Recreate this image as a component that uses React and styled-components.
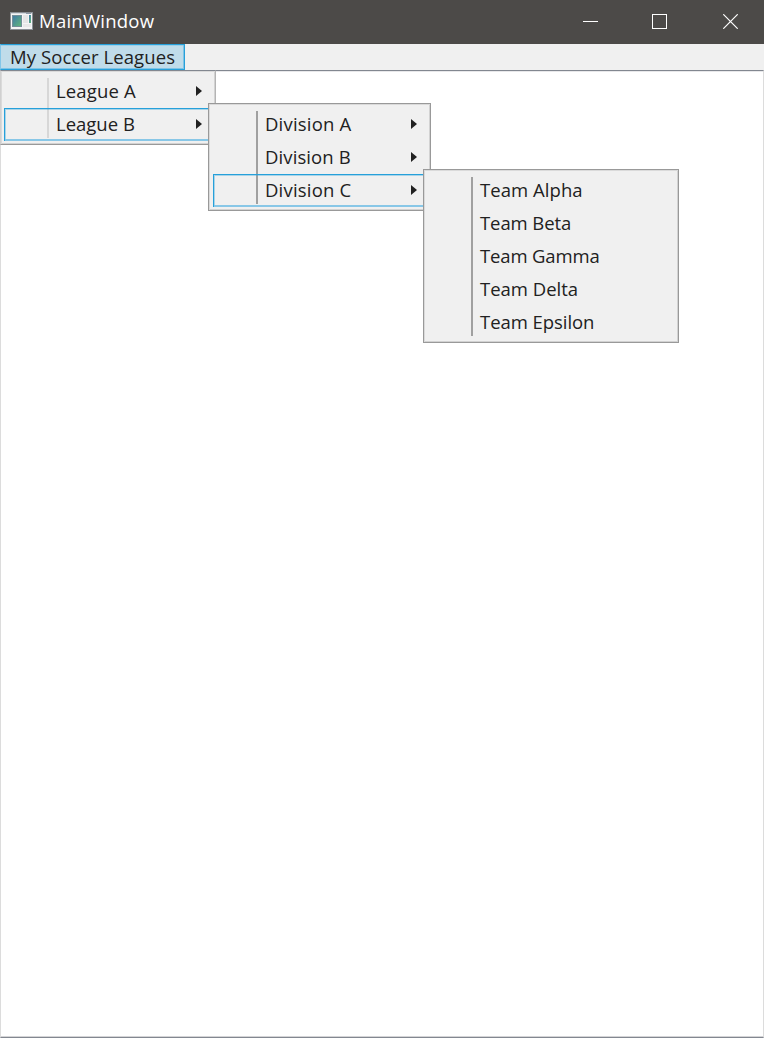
import React from "react";
import styled, { createGlobalStyle, css } from "styled-components";

const GlobalStyle = createGlobalStyle`
  * { box-sizing: border-box; }
  body {
    margin: 0;
    background: #fff;
    color: #212121;
    font-family: "Open Sans", "Noto Sans", sans-serif;
    font-size: 18.5px;
  }
`;

const Window = styled.div`
  display: flex;
  flex-direction: column;
  width: 764px;
  height: 1038px;
  overflow: hidden;
`;

const TitleBar = styled.header`
  display: flex;
  align-items: center;
  height: 44px;
  padding-left: 10px;
  background: #4c4a48;
  color: #fff;
`;

const Title = styled.div`
  flex: 1;
  height: 44px;
  margin-left: 6px;
  line-height: 42px;
  letter-spacing: 0.25px;
`;

const AppIcon = styled.svg`
  display: block;
  width: 23px;
  height: 18px;
  margin-top: -3px;
`;

const CaptionButton = styled.button`
  display: flex;
  align-items: center;
  justify-content: center;
  width: 70px;
  height: 44px;
  padding: 0 ${(p) => p.$inset || 0}px 1px 0;
  border: 0;
  background: transparent;
`;

const CaptionButtons = styled.div`
  display: flex;
  margin-right: -1px;
`;

const Glyph = styled.svg`
  display: block;
  width: 15px;
  height: 15px;
  fill: none;
  stroke: #fff;
`;

const MenuBar = styled.nav`
  display: flex;
  flex: none;
  position: relative;
  height: 26px;
  background: #f0f0f0;
`;

const MenuBarItem = styled.div`
  width: 185px;
  height: 26px;
  padding-left: 9px;
  border: 1px solid #26a0da;
  border-left-color: #84c6e8;
  box-shadow: inset -1px -1px #7fc3e5, inset 0 1px #9cd0e9;
  background: #c0dcea;
  line-height: 24px;
  white-space: nowrap;
  letter-spacing: 0.1px;
`;

const Client = styled.main`
  flex: 1;
  border: 1px solid #dcdcdc;
  border-top-color: #828790;
  border-bottom: 1px solid #828790;
  box-shadow: inset 0 1px #e8e8ea, inset 0 -1px #d4d4d6;
`;

const Menu = styled.div`
  position: absolute;
  z-index: 1;
  left: ${(p) => p.$left}px;
  top: ${(p) => p.$top}px;
  width: ${(p) => p.$width}px;
  padding: 4px 3px 3px 4px;
  border: 1px solid #999;
  background: #f0f0f0;
  box-shadow: inset 1px 1px #dadada, inset -1px -1px #d2d2d2;
  ${(p) => p.$root && css`
    padding-left: 3px;
    border-left-color: #d0d0d0;
    border-right-color: #b4b4b4;
    border-top-color: #828790;
  `}

  &::before {
    content: "";
    position: absolute;
    left: ${(p) => (p.$root ? 46 : 47)}px;
    top: 7px;
    bottom: 6px;
    width: 2px;
    background: ${(p) => (p.$root ? "#d7d7d7" : "#a0a0a0")};
  }
`;

const MenuRow = styled.div`
  display: flex;
  align-items: flex-start;
  position: relative;
  height: 33px;
  padding-left: 52px;
  white-space: nowrap;
  ${(p) => p.$open && css`
    border: solid #26a0da;
    border-width: 1px 0 0 1px;
    padding-left: 51px;
    box-shadow: inset 1px 1px rgba(38, 160, 218, 0.35);

    &::after {
      content: "";
      position: absolute;
      left: 0;
      right: 0;
      bottom: 0;
      height: 2px;
      background: #88c7e7;
    }
  `}
`;

const Label = styled.span`
  flex: 1;
  height: 31px;
  margin-top: ${(p) => (p.$open ? -1 : 0)}px;
  line-height: 31px;
  letter-spacing: ${(p) => p.$spacing || 0}px;
`;

const Arrow = styled.svg`
  display: block;
  width: 6px;
  height: 10px;
  margin: ${(p) => (p.$open ? 10 : 11)}px 10px 0 0;
  fill: #212121;
`;

function Item({ label, spacing, open, submenu }) {
  return (
    <MenuRow $open={open}>
      <Label $spacing={spacing} $open={open}>{label}</Label>
      {submenu && (
        <Arrow $open={open} viewBox="0 0 6 10">
          <path d="M0 0L6 5L0 10Z" />
        </Arrow>
      )}
    </MenuRow>
  );
}

export default function App() {
  return (
    <Window>
      <GlobalStyle />
      <TitleBar>
        <AppIcon viewBox="0 0 23 18">
          <defs>
            <linearGradient id="pane" x1="0" y1="0" x2="1" y2="1">
              <stop offset="0" stopColor="#3f78a8" />
              <stop offset="1" stopColor="#62b979" />
            </linearGradient>
          </defs>
          <rect x=".5" y=".5" width="22" height="17" fill="#f5f5f5" stroke="#8b9095" />
          <path d="M1 1.5H22" stroke="#d5dae0" />
          <path d="M16 1.5H21" stroke="#8d99a5" />
          <rect x="2.5" y="3.5" width="9" height="11" fill="url(#pane)" stroke="#748f99" />
          <rect x="13" y="3" width="5" height="8" fill="#e6e6e6" />
          <rect x="13" y="12" width="8" height="3" fill="#e9e9e9" />
          <rect x="19" y="3" width="2" height="8" fill="url(#pane)" />
        </AppIcon>
        <Title>MainWindow</Title>
        <CaptionButtons>
          <CaptionButton aria-label="Minimize">
            <Glyph viewBox="0 0 15 15"><path d="M0 7.5H15" /></Glyph>
          </CaptionButton>
          <CaptionButton aria-label="Maximize" $inset={2}>
            <Glyph viewBox="0 0 15 15"><rect x=".5" y=".5" width="14" height="14" /></Glyph>
          </CaptionButton>
          <CaptionButton aria-label="Close">
            <Glyph viewBox="0 0 15 15"><path d="M.3 .3L14.7 14.7M14.7 .3L.3 14.7" strokeWidth="1.2" /></Glyph>
          </CaptionButton>
        </CaptionButtons>
      </TitleBar>
      <MenuBar>
        <MenuBarItem>My Soccer Leagues</MenuBarItem>
        <Menu $root $left={0} $top={26} $width={216}>
          <Item label="League A" spacing={0.15} submenu />
          <Item label="League B" submenu open />
        </Menu>
        <Menu $left={208} $top={59} $width={223}>
          <Item label="Division A" spacing={0.2} submenu />
          <Item label="Division B" spacing={0.1} submenu />
          <Item label="Division C" spacing={0.2} submenu open />
        </Menu>
        <Menu $left={423} $top={125} $width={256}>
          <Item label="Team Alpha" spacing={0.05} />
          <Item label="Team Beta" spacing={-0.1} />
          <Item label="Team Gamma" spacing={-0.15} />
          <Item label="Team Delta" />
          <Item label="Team Epsilon" spacing={-0.05} />
        </Menu>
      </MenuBar>
      <Client />
    </Window>
  );
}
